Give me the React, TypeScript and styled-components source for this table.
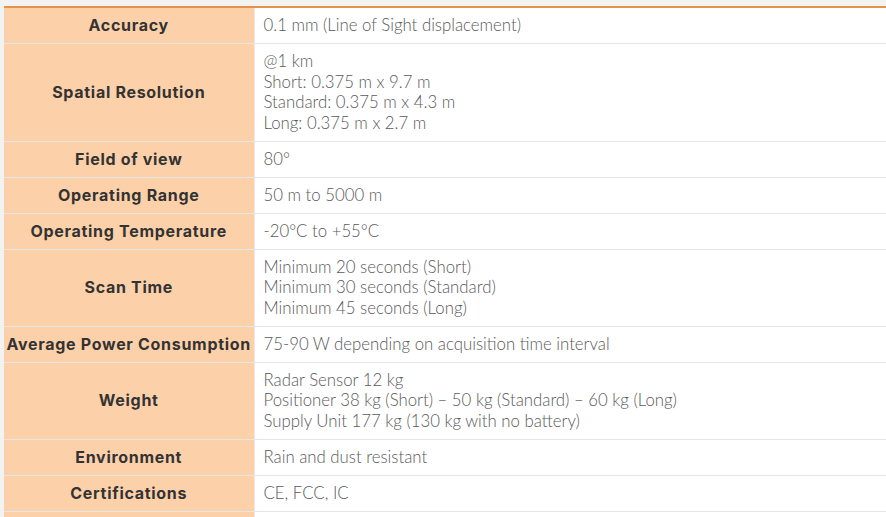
import * as React from 'react'
import styled, { createGlobalStyle } from 'styled-components'

type Spec = {
  label: string
  lines: string[]
}

const specs: Spec[] = [
  { label: 'Accuracy', lines: ['0.1 mm (Line of Sight displacement)'] },
  {
    label: 'Spatial Resolution',
    lines: ['@1 km', 'Short: 0.375 m x 9.7 m', 'Standard: 0.375 m x 4.3 m', 'Long: 0.375 m x 2.7 m'],
  },
  { label: 'Field of view', lines: ['80°'] },
  { label: 'Operating Range', lines: ['50 m to 5000 m'] },
  { label: 'Operating Temperature', lines: ['-20°C to +55°C'] },
  {
    label: 'Scan Time',
    lines: ['Minimum 20 seconds (Short)', 'Minimum 30 seconds (Standard)', 'Minimum 45 seconds (Long)'],
  },
  { label: 'Average Power Consumption', lines: ['75-90 W depending on acquisition time interval'] },
  {
    label: 'Weight',
    lines: [
      'Radar Sensor 12 kg',
      'Positioner 38 kg (Short) – 50 kg (Standard) – 60 kg (Long)',
      'Supply Unit 177 kg (130 kg with no battery)',
    ],
  },
  { label: 'Environment', lines: ['Rain and dust resistant'] },
  { label: 'Certifications', lines: ['CE, FCC, IC'] },
  // next row is cut off by the window, only its backgrounds show
  { label: '\u00a0', lines: ['\u00a0'] },
]

const GlobalStyle = createGlobalStyle`
  html, body {
    margin: 0;
    background: #f3f3f3;
    overflow: hidden;
  }
`

const App: React.FC = () => {
  return (
    <>
      <GlobalStyle />
      <Page>
        <SpecTable>
          <colgroup>
            <col style={{ width: 250 }} />
            <col />
          </colgroup>
          <tbody>
            {specs.map((spec, i) => (
              <Row key={i}>
                <Label>{spec.label}</Label>
                <Value>
                  {spec.lines.map((line, j) => (
                    <Line key={j}>{line}</Line>
                  ))}
                </Value>
              </Row>
            ))}
          </tbody>
        </SpecTable>
      </Page>
    </>
  )
}

const Page = styled.div`
  padding: 6px 0 0 4px;
`
const SpecTable = styled.table`
  width: 1000px;
  table-layout: fixed;
  border-collapse: collapse;
  border-top: 2px solid #e8914a;
  background: #ffffff;
`
const Row = styled.tr`
  border-bottom: 1px solid #e6e6e6;
`
const Label = styled.td`
  padding: 7px 0;
  background: #fcd1aa;
  border-right: 1px solid #efe7e0;
  text-align: center;
  vertical-align: middle;
  font-family: Inter, 'DejaVu Sans', sans-serif;
  font-weight: 700;
  font-size: 16px;
  letter-spacing: 0.7px;
  line-height: 20.5px;
  color: #333333;
  white-space: nowrap;
`
const Value = styled.td`
  padding: 7.25px 9px;
  vertical-align: middle;
  font-family: Lato, 'Liberation Sans', sans-serif;
  font-weight: 300;
  font-size: 16.8px;
  line-height: 20.5px;
  color: #5a5a5a;
`
const Line = styled.div``

export default App
